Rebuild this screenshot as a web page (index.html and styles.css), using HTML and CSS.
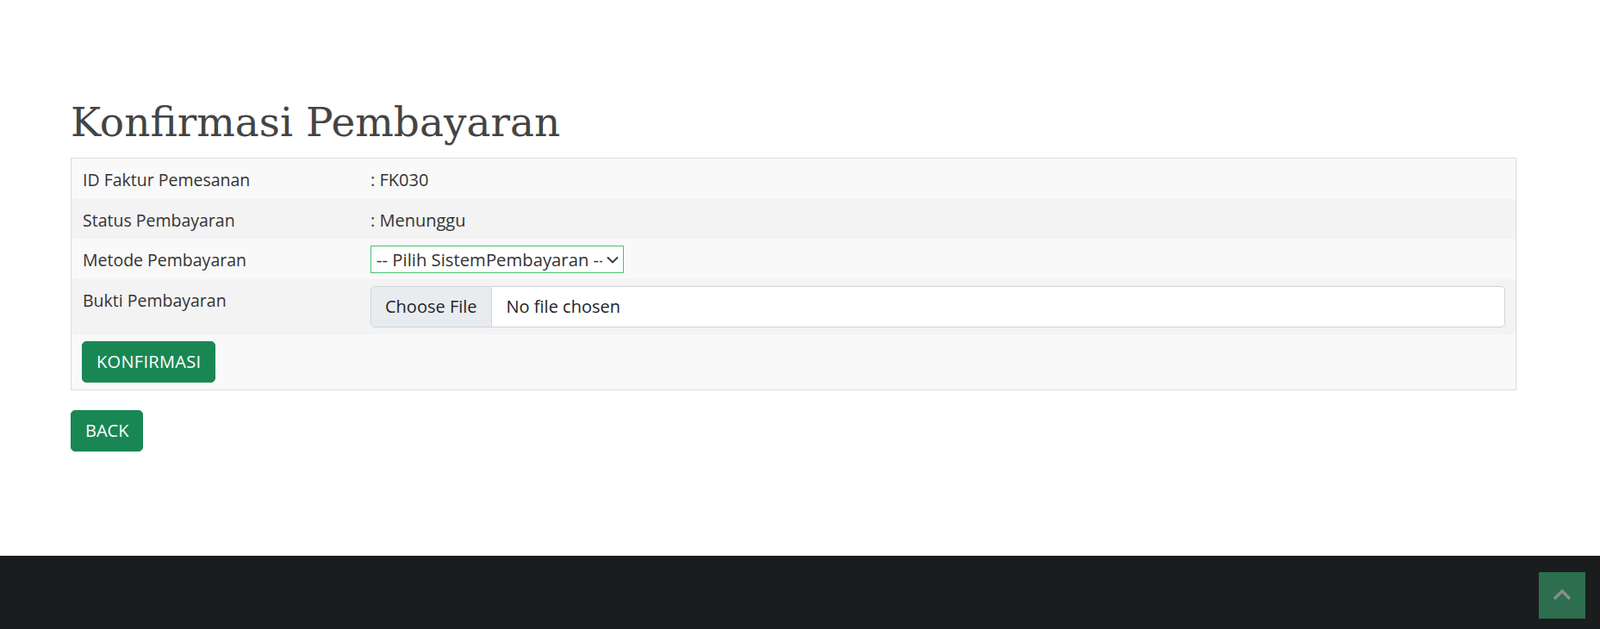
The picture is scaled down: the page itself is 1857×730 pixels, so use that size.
FILE: index.html
```html
<!DOCTYPE html>
<html lang="id">
<head>
<meta charset="utf-8">
<title>Konfirmasi Pembayaran</title>
<link rel="stylesheet" href="styles.css">
</head>
<body>
<main class="page">
  <h1 class="title">Konfirmasi Pembayaran</h1>
  <form class="confirm-form">
    <table class="info-table">
      <colgroup><col class="col-label"><col></colgroup>
      <tbody>
        <tr class="row row-odd r1">
          <td class="label">ID Faktur Pemesanan</td>
          <td>: FK030</td>
        </tr>
        <tr class="row row-even r2">
          <td class="label">Status Pembayaran</td>
          <td>: Menunggu</td>
        </tr>
        <tr class="row row-odd r3">
          <td class="label">Metode Pembayaran</td>
          <td class="ctrl">
            <select class="method-select">
              <option>-- Pilih SistemPembayaran --</option>
            </select>
          </td>
        </tr>
        <tr class="row row-even r4">
          <td class="label">Bukti Pembayaran</td>
          <td class="ctrl"><input class="file-input" type="file"></td>
        </tr>
        <tr class="row row-odd r5">
          <td class="ctrl btn-cell" colspan="2"><button type="button" class="btn btn-success btn-confirm">KONFIRMASI</button></td>
        </tr>
      </tbody>
    </table>
  </form>
  <a class="btn btn-success back-btn" href="#">BACK</a>
</main>
<footer class="footer"></footer>
<a class="to-top" href="#" aria-label="Back to top">
  <svg width="22" height="14" viewBox="0 0 22 14" aria-hidden="true"><path d="M2 12 L11 3 L20 12" fill="none" stroke="#8c8c8c" stroke-width="3.5"/></svg>
</a>
</body>
</html>
```
FILE: styles.css
```css
* { box-sizing: border-box; }
html, body { margin: 0; padding: 0; }
body {
  font-family: "Open Sans", "Noto Sans", Arial, sans-serif;
  font-size: 20px;
  line-height: 1.5;
  color: #333;
  background: #fff;
  min-height: 730px;
  display: flex;
  flex-direction: column;
}
.page {
  flex: 1;
  padding: 114px 97px 0 82px;
}
.title {
  margin: 0 0 13px;
  font-family: "DejaVu Serif", "Liberation Serif", Georgia, serif;
  font-weight: normal;
  font-size: 47px;
  line-height: 56px;
  color: #444;
}
.confirm-form { margin: 0; }
.info-table {
  width: 100%;
  table-layout: fixed;
  border-collapse: separate;
  border-spacing: 0;
  border: 1px solid #dcdcdc;
}
.col-label { width: 334px; }
.info-table td {
  padding: 10px 12px 6px 13px;
  vertical-align: top;
  line-height: 30px;
}
.info-table td.ctrl { padding-top: 8px; padding-bottom: 7px; }
.info-table td.btn-cell { padding-left: 12px; }
.info-table td.label { font-size: 19.5px; }
.row-odd { background: #f9f9f9; }
.row-even { background: #f3f3f3; }
.r1 { height: 47px; }
.r2 { height: 46px; }
.r3 { height: 47px; }
.r4 { height: 64px; }
.r5 { height: 64px; }
.method-select {
  appearance: none;
  -webkit-appearance: none;
  display: block;
  width: 294px;
  height: 32px;
  margin: 0;
  padding: 0 24px 0 6px;
  font-family: inherit;
  font-size: 20.3px;
  line-height: 30px;
  color: #333;
  border: 1px solid #45c270;
  border-radius: 0;
  background: #fff url("data:image/svg+xml,%3Csvg xmlns='http://www.w3.org/2000/svg' width='14' height='9' viewBox='0 0 14 9'%3E%3Cpath d='M1 1.5 L7 7.5 L13 1.5' fill='none' stroke='%23333' stroke-width='1.8'/%3E%3C/svg%3E") no-repeat right 5px center;
}
.file-input {
  display: block;
  width: 100%;
  height: 48px;
  margin: 0;
  padding: 8px 16px;
  font-family: inherit;
  font-size: 20px;
  line-height: 30px;
  color: #212529;
  background: #fff;
  border: 1px solid #ced4da;
  border-radius: 5px;
  overflow: hidden;
}
.file-input::file-selector-button {
  margin: -8px 17px -8px -16px;
  padding: 8px 16px;
  height: 46px;
  font-family: inherit;
  font-size: 20px;
  line-height: 30px;
  color: #212529;
  background: #e9ecef;
  border: 0;
  border-right: 1px solid #ced4da;
  border-radius: 0;
}
.btn {
  display: inline-block;
  height: 48px;
  padding: 8px 16px;
  font-family: inherit;
  font-size: 20px;
  line-height: 30px;
  text-decoration: none;
  border-radius: 5px;
  cursor: pointer;
}
.btn-confirm { letter-spacing: 0.3px; }
.btn-success {
  color: #fff;
  background: #198754;
  border: 1px solid #198754;
}
.back-btn {
  margin-top: 23px;
}
.footer {
  height: 85px;
  background: #1b1c1e;
}
.to-top {
  position: fixed;
  right: 17px;
  bottom: 12px;
  width: 54px;
  height: 54px;
  background: #2c6e4d;
  display: flex;
  align-items: center;
  justify-content: center;
}
.to-top svg { display: block; margin-top: -2px; }
```
